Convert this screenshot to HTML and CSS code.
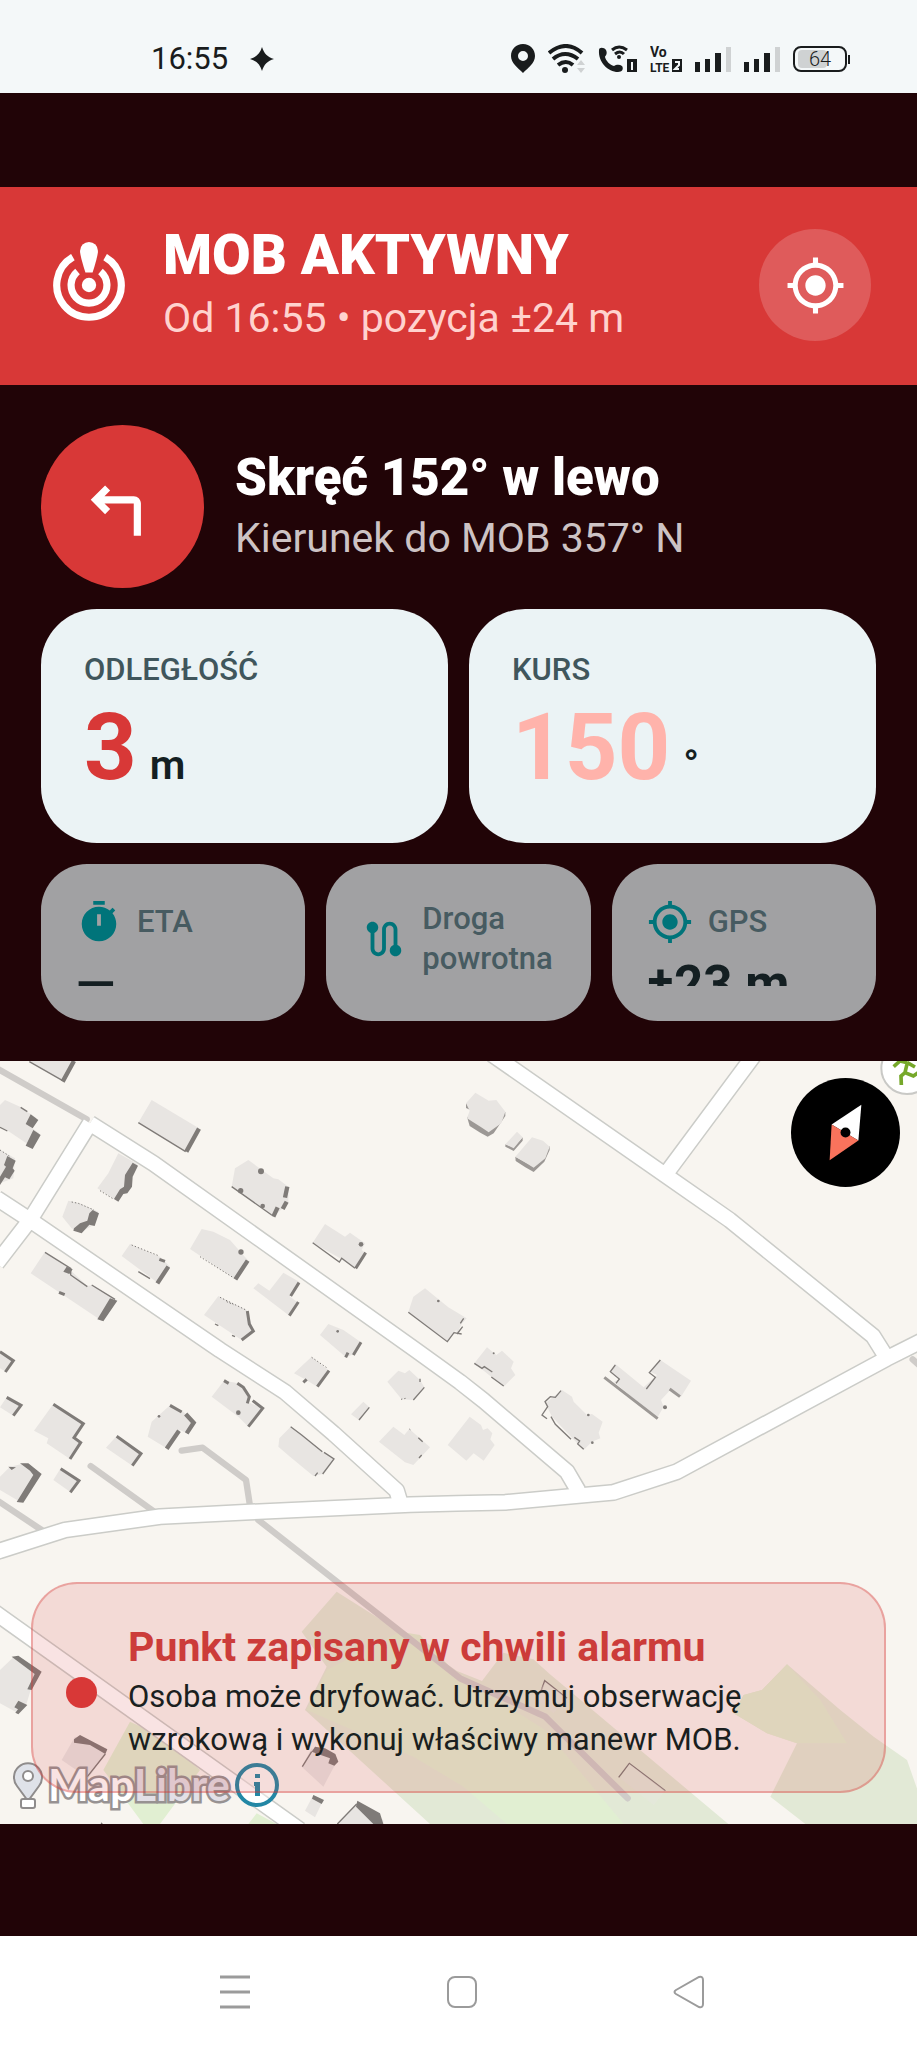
FILE: index.html
```html
<!DOCTYPE html>
<html lang="pl">
  <head>
    <meta charset="UTF-8" />
    <meta name="viewport" content="width=device-width, initial-scale=1.0" />
    <title>MOB aktywny</title>
    <link rel="stylesheet" href="styles.css">
  </head>
  <body>
    <div class="status-bar">
      <div class="status-left">
        <span class="status-time">16:55</span>
        <svg class="status-star" viewBox="0 0 24 24"><path d="M12 0c2 6.500 5.500 10 12 12-6.500 2-10 5.500-12 12-2-6.500-5.500-10-12-12 6.500-2 10-5.500 12-12z" /></svg>
      </div>
      <div class="status-icons">
        <svg width="24" height="29" viewBox="0 0 24 29"><path fill-rule="evenodd" d="M12 0C5 0 0 5 0 12c0 7 7 12 12 17 5-5 12-10 12-17C24 5 19 0 12 0zm0 7a5 5 0 1 1 0 10 5 5 0 0 1 0-10z" /></svg>
        <svg class="icon-wifi" width="37" height="29" viewBox="0 0 37 29">
          <path class="line" d="M1 9q17-14 33 0M5 15q12-10 25 0M10 21q8-6 15 0" />
          <circle cx="17" cy="26" r="3" />
          <path class="faint" d="M29 21l4-5 4 5zM29 24h8l-4 5z" />
        </svg>
        <svg class="icon-call" width="39" height="28" viewBox="0 0 39 28">
          <path d="M1 5c0-3 5-3 7 0 2 4-1 6-1 7 1 4 5 8 9 9 2-1 5-2 8 0 2 3 0 6-4 6C10 27 0 17 1 5z" />
          <path class="line" d="M14 5q7-6 15 0M17 9q5-4 9 0" />
          <circle cx="21" cy="12" r="2" />
          <rect x="29" y="14" width="10" height="13" />
          <path class="cut" d="M34 17v8" />
        </svg>
        <svg class="icon-volte" width="32" height="28" viewBox="0 0 32 28">
          <text x="0" y="12">Vo</text>
          <text x="0" y="27">LTE</text>
          <rect x="22" y="14" width="10" height="13" />
          <path class="cut" d="M25 17h4v3l-4 4h4" />
        </svg>
        <svg width="36" height="26" viewBox="0 0 36 26"><path d="M0 16h5v10H0zM10 13h5v13h-5zM20 7h6v19h-6z" /><path class="faint" d="M31 1h5v25h-5z" /></svg>
        <svg width="36" height="26" viewBox="0 0 36 26"><path d="M0 16h5v10H0zM10 13h5v13h-5zM20 7h6v19h-6z" /><path class="faint" d="M31 1h5v25h-5z" /></svg>
        <svg class="icon-battery" width="58" height="26" viewBox="0 0 58 26">
          <rect class="faint" x="5" y="4" width="29" height="18" rx="4" />
          <rect class="frame" x="1" y="1" width="52" height="24" rx="7" />
          <rect x="55" y="9" width="2" height="9" />
          <text x="27" y="20" text-anchor="middle">64</text>
        </svg>
      </div>
    </div>

    <main class="screen">
      <header class="alarm">
        <svg class="alarm-icon" viewBox="0 0 24 24">
          <path d="M14.500 2.500C14.500 4 13 8.500 13 8.500h-2S9.500 4 9.500 2.500a2.500 2.500 0 0 1 5 0z" />
          <circle cx="12" cy="12" r="2" />
          <path class="ring" d="M16.500 4.200a9 9 0 1 1-9 0M15.200 8.200a5 5 0 1 1-6.400 0" />
        </svg>
        <div class="alarm-text">
          <h1>MOB AKTYWNY</h1>
          <p>Od 16:55 • pozycja ±24 m</p>
        </div>
        <button class="locate-button" aria-label="Moja pozycja">
          <svg viewBox="0 0 24 24"><path d="M12 8c-2.210 0-4 1.790-4 4s1.790 4 4 4 4-1.790 4-4-1.790-4-4-4zm8.940 3c-.46-4.170-3.770-7.480-7.940-7.940V1h-2v2.060C6.830 3.520 3.520 6.830 3.060 11H1v2h2.060c.46 4.170 3.770 7.480 7.940 7.940V23h2v-2.060c4.170-.46 7.480-3.770 7.940-7.940H23v-2h-2.060zM12 19c-3.870 0-7-3.130-7-7s3.130-7 7-7 7 3.130 7 7-3.130 7-7 7z" /></svg>
        </button>
      </header>

      <section class="panel">
        <div class="turn">
          <div class="turn-icon">
            <svg viewBox="0 0 24 24"><path d="M6.830 11l1.580 1.590L7 14l-4-4 4-4 1.410 1.410L6.830 9H15c1.100 0 2 .9 2 2v9h-2v-9H6.830z" /></svg>
          </div>
          <div class="turn-text">
            <h2>Skręć 152° w lewo</h2>
            <p>Kierunek do MOB 357° N</p>
          </div>
        </div>

        <div class="cards">
          <div class="card">
            <div class="card-label">ODLEGŁOŚĆ</div>
            <div class="card-value"><span class="number">3</span><span class="unit">m</span></div>
          </div>
          <div class="card">
            <div class="card-label">KURS</div>
            <div class="card-value"><span class="number number-pale">150</span><span class="unit">°</span></div>
          </div>
        </div>

        <div class="tiles">
          <div class="tile">
            <div class="tile-body">
              <div class="tile-head">
                <svg viewBox="0 0 24 24"><path fill-rule="evenodd" d="M15 1H9v2h6V1zm-4 13h2V8h-2v6zm8.030-6.610l1.420-1.420c-.43-.51-.9-.99-1.410-1.410l-1.420 1.420C16.070 4.740 14.120 4 12 4c-4.970 0-9 4.030-9 9s4.020 9 9 9 9-4.030 9-9c0-2.120-.74-4.070-1.970-5.610z" /></svg>
                <span>ETA</span>
              </div>
              <div class="tile-value">—</div>
            </div>
          </div>
          <div class="tile">
            <div class="tile-body">
              <div class="tile-head">
                <svg viewBox="0 0 24 24"><path d="M19 15.180V7c0-2.210-1.790-4-4-4s-4 1.790-4 4v10c0 1.100-.9 2-2 2s-2-.9-2-2V8.820C8.160 8.400 9 7.300 9 6c0-1.660-1.340-3-3-3S3 4.340 3 6c0 1.300.84 2.400 2 2.820V17c0 2.210 1.790 4 4 4s4-1.790 4-4V7c0-1.100.9-2 2-2s2 .9 2 2v8.180c-1.160.41-2 1.510-2 2.820 0 1.660 1.340 3 3 3s3-1.340 3-3c0-1.300-.84-2.400-2-2.820z" /></svg>
                <span>Droga powrotna</span>
              </div>
            </div>
          </div>
          <div class="tile">
            <div class="tile-body">
              <div class="tile-head">
                <svg viewBox="0 0 24 24"><path d="M12 8c-2.210 0-4 1.790-4 4s1.790 4 4 4 4-1.790 4-4-1.790-4-4-4zm8.940 3c-.46-4.170-3.770-7.480-7.940-7.940V1h-2v2.060C6.830 3.520 3.520 6.830 3.060 11H1v2h2.060c.46 4.170 3.770 7.480 7.940 7.940V23h2v-2.060c4.170-.46 7.480-3.770 7.940-7.940H23v-2h-2.060zM12 19c-3.870 0-7-3.130-7-7s3.130-7 7-7 7 3.130 7 7-3.130 7-7 7z" /></svg>
                <span>GPS</span>
              </div>
              <div class="tile-value">±23 m</div>
            </div>
          </div>
        </div>
      </section>

      <section class="map">
        <svg class="map-canvas" viewBox="0 0 2751 2289" preserveAspectRatio="xMidYMid slice">
          <!-- forest and meadow -->
          <g class="green">
            <path d="M1010 1592L1200 1712 1371 1830 1446 1860 1510 1775 1600 1795 1650 1840 2185 2289H1290L915 1947 980 1817 905 1712z" />
            <path d="M2361 1810L2521 1947 2621 2027 2721 2097 2756 2197V2289H2416L2311 2207 2391 2047 2301 2017 2201 1957 2231 1902 2286 1887z" />
            <path class="green-light" d="M980 1827L1200 1712 1260 1722 1371 1840 1636 2007 1871 2289H1521L1390 2177 1240 2087 920 1947z" />
            <path class="green-light" d="M2361 1810L2461 1917 2541 2047H2391L2301 2017 2201 1957 2231 1902 2286 1887z" />
            <path class="green-light" d="M390 1982L490 2027 600 2127 480 2289H430L310 2127zM770 2257L830 2289H745z" />
          </g>
          <!-- footpaths -->
          <g class="path">
            <path d="M-10 22L260 175M272 1215L460 1350M545 1169L608 1160 738 1257 750 1335M-10 1317L125 1407M775 1377L1380 1852 1636 1967 1883 2212M2738 895L2760 915" />
          </g>
          <!-- roads: casing first, white surface on top -->
          <g class="road-casing">
            <path d="M270 187L460 307 1247 867 1380 963 1451 1019 1701 1232 1735 1290M-10 607L90 477 270 187M-10 412L90 477 660 867 855 993 1000 1117 1190 1289 1200 1322" />
            <path d="M-20 1476L0 1469 195 1407 480 1367 750 1353 1230 1331 1371 1327 1516 1324 1841 1294 2031 1232 2661 892 2770 837" />
            <path d="M1476 -20L2011 353 2189 477 2619 825 2661 892M2270 -28L1996 341M-20 1651L0 1665 900 2307" />
          </g>
          <g class="road">
            <path d="M270 187L460 307 1247 867 1380 963 1451 1019 1701 1232 1735 1290M-10 607L90 477 270 187M-10 412L90 477 660 867 855 993 1000 1117 1190 1289 1200 1322" />
            <path d="M-20 1476L0 1469 195 1407 480 1367 750 1353 1230 1331 1371 1327 1516 1324 1841 1294 2031 1232 2661 892 2770 837" />
            <path d="M1476 -20L2011 353 2189 477 2619 825 2661 892M2270 -28L1996 341M-20 1651L0 1665 900 2307" />
          </g>
          <!-- buildings, north west -->
          <g transform="translate(0 -33)">
            <path class="roof" d="M85 33H225L190 92zM15 150L60 170 110 205 90 230 118 250 95 290 20 240 0 230V165zM0 300L45 325 40 385 0 400zM455 150L597 235 557 305 415 218zM355 310L412 342 350 452 292 415 325 370zM205 452L240 460 295 485 280 525 240 548 215 535 187 500z" />
            <path class="roof" d="M135 605L200 650 262 708 280 705 350 750 305 812 92 670zM390 582L480 620 510 650 475 700 365 618zM605 537L640 545 690 570 745 632 705 687 570 597zM745 330L820 385 835 388 865 410 865 460 820 500 695 410 705 355z" />
            <path class="roof" d="M975 522L1035 560 1050 548 1095 580 1085 600 1098 610 1065 655 1020 625 938 578zM850 668L900 697 870 740 897 760 868 797 760 715 775 700 808 722zM655 738L740 780 760 840 725 870 612 795zM1275 715L1345 772 1400 805 1360 850 1342 875 1225 787 1240 740z" />
            <path class="wall" d="M92 193L115 210 98 235 77 222zM100 240L122 255 98 297 77 287zM22 318L47 332 38 355 44 362 28 388 15 382 0 405V380L18 350 12 345zM398 338L414 347 398 380 396 410 382 430 370 432 355 455 342 447 360 418 372 410 375 375zM278 480L297 490 284 528 268 524 245 550 220 542 222 535 240 520 262 512 268 490zM330 745L352 752 310 814 292 808zM200 650L218 658 208 672 190 665z" />
            <path class="edge thick" d="M222 33L188 95M597 236L559 305M505 650L472 700M743 632L706 688M862 410L855 443M860 455L848 477M833 472L820 500" />
            <path class="edge" d="M478 628L495 634M177 727L194 734M1097 608L1067 655M897 698L872 738M895 756L868 797M742 783L748 822 760 843 725 870" />
            <path class="edge thin" d="M88 35L188 92M62 172L82 185M0 232L22 243M415 218L557 305M135 607L212 655 212 675 262 710M275 705L345 748M415 665L450 686M695 410L815 495M938 578L1018 636 1025 625 1065 655M645 822L655 827M696 856L705 860M1225 787L1342 875 1362 848 1385 852" />
            <path class="edge dotted" d="M395 585L478 618M300 422L342 448M215 456L235 460 282 480M600 620L700 683M660 742L738 780M0 300L28 318" />
            <circle class="wall" cx="783" cy="364" r="9" />
            <circle class="wall" cx="722" cy="422" r="8" />
            <circle class="wall" cx="788" cy="468" r="7" />
            <circle class="wall" cx="723" cy="606" r="8" />
            <circle class="wall" cx="1083" cy="583" r="7" />
            <circle class="wall" cx="1315" cy="753" r="4" />
          </g>
          <!-- buildings, north east -->
          <g transform="translate(1371 -33)">
            <path class="wall-soft" d="M27 160L48 170 45 182 27 174zM30 200L95 240 145 185 145 198 110 250 92 260 70 248 38 228zM145 283L170 292 197 262V272L170 303 145 290zM175 320L230 350 278 288 278 300 262 335 230 366 205 352 176 333z" />
            <path class="roof" d="M55 128L95 152 118 150 145 185 133 220 95 247 75 233 30 205 38 182 27 160zM180 245L197 262 170 295 145 283zM225 262L258 272 278 290 265 325 230 353 212 342 175 320z" />
          </g>
          <!-- buildings, south west -->
          <g transform="translate(0 717)">
            <path class="roof" d="M0 160L40 183 18 215 0 205zM20 292L63 315 40 347 0 322zM160 312L250 370 220 413 242 428 210 477 140 430 145 415 102 392zM350 408L423 460 397 497 318 443zM30 500L75 490 120 520 60 605 0 570V530zM182 505L237 542 212 577 160 540z" />
            <path class="roof" d="M510 316L550 335 585 368 560 400 540 390 500 445 443 410 455 365zM672 242L715 250 750 292 742 305 788 325 745 380 715 350 635 290zM872 380L967 455 1002 477 968 522 940 528 870 470 835 440 838 415z" />
            <path class="roof" d="M985 72L1030 90 1083 127 1055 165 1038 172 960 105zM935 170L987 212 952 260 915 238 882 220zM1195 212L1215 220 1228 210 1260 240 1273 262 1240 300 1205 298 1162 245zM1090 305L1108 322 1077 360 1053 343zM1180 380L1213 405 1228 387 1290 442 1240 495 1215 487 1137 425z" />
            <path class="wall" d="M60 490L85 490 125 522 70 608 50 606 100 525 90 512zM25 500L48 502 35 510z" />
            <path class="edge" d="M0 155L40 182 16 216M20 292L63 316 40 347M160 313L250 371 222 413 242 428 210 477M350 409L423 461 397 497M182 506L237 542 211 577M510 316L545 336M672 242L686 250M712 250L730 262 748 290 742 310M758 302L788 325 745 380M1083 127L1060 165M1044 158L1037 172M987 212L952 260M920 238L910 247" />
            <path class="edge thick" d="M557 342L581 368 560 400M537 392L500 446" />
            <path class="edge thin" d="M872 380L905 405 967 455M972 457L1002 477 968 522M953 518L945 528M1273 262L1240 300M1108 322L1077 360M1255 413L1268 425M1265 465L1257 474M1260 236V246" />
            <path class="edge dotted" d="M935 172L980 203M680 5L700 14M1203 298L1222 294M1228 387L1236 393" />
            <circle class="wall" cx="715" cy="338" r="7" />
            <circle class="wall" cx="477" cy="349" r="4" />
            <circle class="wall" cx="1013" cy="94" r="4" />
          </g>
          <!-- buildings, south east -->
          <g transform="translate(1371 717)">
            <path class="roof" d="M-10 40L20 58 0 102zM38 350L72 375 78 390 92 385 106 400 100 418 113 435 80 482 50 460 28 482-28 435zM90 142L118 165 135 152 170 185 162 205 175 225 140 260 52 190zM315 270L345 290 350 305 390 345 405 342 437 365 425 398 430 415 405 425 380 450 285 350 265 310zM475 192L560 262 600 225 580 215 610 180 702 242 672 290 640 270 612 300 620 320 600 355 470 245 487 238 460 215z" />
            <path class="edge thin" d="M20 55L10 70M17 80L0 102M52 190L75 205 82 200 106 216M103 231L140 258M312 272L295 292 280 290 264 305 272 320 255 345 270 356M282 350L295 373 342 418M352 412L368 423 362 432 380 448M475 195L460 215 487 237 477 250M610 180L577 218 595 232 568 267" />
            <path class="edge soft" d="M442 232L602 356M638 267L669 290" />
            <circle class="wall" cx="624" cy="322" r="6" />
            <circle class="wall" cx="394" cy="345" r="4" />
            <circle class="wall" cx="406" cy="428" r="4" />
            <circle class="wall" cx="110" cy="160" r="3" />
          </g>
          <!-- buildings, south edge -->
          <g transform="translate(0 1527)">
            <path class="roof" d="M40 262L115 305 95 350 80 400 55 430 0 400V300zM225 500L320 545 265 625 185 570zM935 535L1010 575 970 650 905 590zM940 675L970 690 945 742 915 722zM1070 700L1150 750V765H1010z" />
            <path class="wall" d="M35 260L55 257 125 305 95 360 82 358 104 312zM55 392L82 405 55 433 46 428 54 418 43 412zM222 508L240 495 322 538 316 552 270 525 222 518zM945 530L975 535 1006 552 1015 575 1003 587 985 580 990 565 935 545zM940 675L972 690 965 702 936 686zM1072 692L1140 730 1150 762H1120L1068 710zM305 757L311 766H299z" />
            <path class="edge thin" d="M316 552L262 620M935 545L907 590M1012 762L1070 702M1621 370L1634 332 1701 385M1856 622L1888 580 1996 662" />
            <path class="roof faded" d="M1636 335L1701 385 1661 430 1606 385zM1888 582L1996 662 1961 705 1861 625z" />
          </g>
          <!-- sport marker in the corner -->
          <circle class="marker" cx="2721" cy="22" r="77" />
          <path class="runner" d="M2681 17L2700 0 2722 5M2722 5L2715 35 2740 45 2755 35M2715 35L2703 45 2704 72M2722 5L2745 18" />
        </svg>

        <button class="compass" aria-label="Kompas">
          <svg viewBox="0 0 110 110">
            <path class="needle-north" d="M71 27L41 47 68 63z" />
            <path class="needle-south" d="M41 47L68 63 39 83z" />
            <circle cx="55" cy="55" r="5" />
          </svg>
        </button>

        <div class="attribution">
          <svg class="pin" viewBox="0 0 32 48">
            <path d="M16 40L5 25A14 14 0 1 1 27 25z" />
            <circle cx="16" cy="15" r="5" />
            <rect x="9" y="38" width="14" height="9" rx="2" />
          </svg>
          <span class="logo">Map<span>Libre</span></span>
          <button class="info-button" aria-label="Informacje o mapie">
            <svg viewBox="0 0 46 46">
              <circle cx="23" cy="23" r="20" />
              <path d="M21 12h5v4h-5zM20 20h6v14h-5V24h-1z" />
            </svg>
          </button>
        </div>

        <div class="notice">
          <span class="notice-dot"></span>
          <div class="notice-text">
            <h3>Punkt zapisany w chwili alarmu</h3>
            <p>Osoba może dryfować. Utrzymuj obserwację wzrokową i wykonuj właściwy manewr MOB.</p>
          </div>
        </div>
      </section>
    </main>

    <nav class="nav-bar">
      <button aria-label="Ostatnie"><svg class="icon-menu" viewBox="0 0 32 34"><path d="M1 2h30M1 17h30M1 32h30" /></svg></button>
      <button aria-label="Ekran główny"><svg viewBox="0 0 32 34"><rect x="2" y="2" width="28" height="30" rx="7" /></svg></button>
      <button aria-label="Wstecz"><svg viewBox="0 0 32 34"><path d="M3 15L26 2q4-1 4 3v24q0 4-4 3L3 19q-3-2 0-4z" /></svg></button>
    </nav>
  </body>
</html>
```

FILE: styles.css
```css
* {
  box-sizing: border-box;
}
body {
  display: flex;
  flex-direction: column;
  min-height: 100vh;
  margin: 0;
  background-color: #210407;
  font-family: Roboto, "Noto Sans", sans-serif;
}
h1,
h2,
h3,
p {
  margin: 0;
}
button {
  padding: 0;
  border: none;
  background-color: transparent;
  cursor: pointer;
}
svg {
  display: block;
  flex: none;
}

/* status bar */
.status-bar {
  display: flex;
  justify-content: space-between;
  align-items: center;
  height: 93px;
  padding: 24px 66px 0 151px;
  background-color: #f4f8f9;
  color: #191c1d;
}
.status-left {
  display: flex;
  align-items: center;
  gap: 22px;
}
.status-time {
  font-size: 31px;
}
.status-star {
  width: 24px;
  height: 24px;
}
.status-bar svg {
  fill: #191c1d;
}
.status-icons {
  display: flex;
  align-items: center;
  gap: 13px;
}
.status-bar .faint {
  fill: #cfd2d3;
}
.status-bar .line {
  fill: none;
  stroke: #191c1d;
  stroke-width: 3;
}
.status-bar .icon-wifi .line {
  stroke-width: 4;
}
.status-bar .cut {
  fill: none;
  stroke: #f4f8f9;
  stroke-width: 2;
}
.icon-volte text {
  font-family: "Liberation Sans Narrow", Roboto, sans-serif;
  font-size: 14px;
  font-weight: 700;
}
.icon-volte text + text {
  font-size: 12px;
}
.icon-battery .frame {
  fill: none;
  stroke: #191c1d;
  stroke-width: 2;
}
.icon-battery text {
  font-size: 20px;
  font-weight: 300;
}

/* alarm header */
.screen {
  display: flex;
  flex-direction: column;
  flex: 1;
  padding: 94px 0 112px;
}
.alarm {
  display: flex;
  align-items: center;
  gap: 31px;
  padding: 38px 46px 40px;
  background-color: #d83837;
  color: #fff;
}
.alarm-icon {
  width: 86px;
  height: 86px;
  fill: #fff;
}
.alarm-icon .ring {
  fill: none;
  stroke: #fff;
  stroke-width: 2;
}
.alarm-text {
  flex: 1;
}
.alarm h1 {
  margin-bottom: 6px;
  font-size: 56px;
  line-height: 60px;
  font-weight: 900;
}
.alarm p {
  font-size: 41px;
  line-height: 54px;
  color: #ffd2ce;
}
.locate-button {
  display: flex;
  justify-content: center;
  align-items: center;
  width: 112px;
  height: 112px;
  border-radius: 50%;
  background-color: rgba(255, 255, 255, 0.18);
}
.locate-button svg {
  width: 61px;
  height: 61px;
  fill: #fff;
}

/* readings */
.panel {
  display: flex;
  flex-direction: column;
  gap: 21px;
  padding: 40px 41px;
}
.turn {
  display: flex;
  align-items: center;
  gap: 31px;
}
.turn-icon {
  display: flex;
  justify-content: center;
  align-items: center;
  width: 163px;
  height: 163px;
  border-radius: 50%;
  background-color: #d83837;
}
.turn-icon svg {
  width: 86px;
  height: 86px;
  fill: #fff;
}
.turn h2 {
  margin-bottom: 3px;
  font-size: 51px;
  line-height: 60px;
  font-weight: 900;
  color: #fff;
}
.turn p {
  font-size: 41px;
  line-height: 54px;
  color: #cdc3c4;
}
.cards {
  display: grid;
  grid-template-columns: repeat(2, 1fr);
  gap: 21px;
}
.card {
  padding: 42px 43px 41px;
  border-radius: 56px;
  background-color: #ebf3f5;
}
.card-label {
  margin-bottom: 5px;
  font-size: 31px;
  line-height: 38px;
  font-weight: 500;
  color: #40565c;
}
.card-value {
  display: flex;
  align-items: baseline;
  gap: 13px;
}
.number {
  font-size: 92px;
  line-height: 108px;
  font-weight: 700;
  color: #d83837;
}
.number-pale {
  color: #ffb3ab;
}
.unit {
  font-size: 41px;
  font-weight: 600;
  color: #141f22;
}
.tiles {
  display: grid;
  grid-template-columns: repeat(3, 1fr);
  gap: 21px;
}
.tile {
  padding: 35px;
  border-radius: 46px;
  background-color: #a1a1a3;
}
/* the value line is taller than the tile and gets cut off */
.tile-body {
  height: 87px;
  overflow: hidden;
}
.tile-head {
  display: flex;
  align-items: center;
  gap: 15px;
  min-height: 46px;
  font-size: 31px;
  line-height: 40px;
  font-weight: 500;
  color: #475b61;
}
.tile-head svg {
  width: 46px;
  height: 46px;
  fill: #00747a;
}
.tile-value {
  margin-top: 6px;
  font-size: 51px;
  line-height: 68px;
  font-weight: 700;
  color: #141f22;
}

/* map */
.map {
  position: relative;
  flex: 1;
  min-height: 600px;
  overflow: hidden;
  background-color: #f8f5f0;
}
.map-canvas {
  position: absolute;
  top: 0;
  left: 0;
  width: 100%;
  height: 100%;
}
.green {
  fill: #e2e9d6;
}
.green-light {
  fill: #e1efd2;
}
.path {
  fill: none;
  stroke: #cfccc9;
  stroke-width: 19;
  stroke-linecap: round;
  stroke-linejoin: round;
}
.road-casing {
  fill: none;
  stroke: #cbccc8;
  stroke-width: 52;
  stroke-linejoin: round;
}
.road {
  fill: none;
  stroke: #fff;
  stroke-width: 43;
  stroke-linejoin: round;
}
.roof {
  fill: #e8e5e2;
}
.faded {
  opacity: 0.4;
}
.wall {
  fill: #7f7b78;
}
.wall-soft {
  fill: #9c9895;
}
.edge {
  fill: none;
  stroke: #7f7b78;
  stroke-width: 9;
}
.thick {
  stroke-width: 13;
}
.thin {
  stroke-width: 4;
}
.dotted {
  stroke-width: 3;
  stroke-dasharray: 4 6;
}
.soft {
  stroke: #9c9895;
}
.marker {
  fill: #fff;
  stroke: #c9c9c6;
  stroke-width: 6;
}
.runner {
  fill: none;
  stroke: #76a82a;
  stroke-width: 11;
}
.compass {
  position: absolute;
  top: 17px;
  right: 17px;
  width: 109px;
  height: 109px;
  border-radius: 50%;
  background-color: #000;
}
.needle-north {
  fill: #fff;
}
.needle-south {
  fill: #f9735c;
}
.attribution {
  position: absolute;
  left: 12px;
  bottom: 15px;
  display: flex;
  align-items: center;
  gap: 4px;
}
.pin {
  width: 32px;
  height: 48px;
  fill: #dfe2e9;
  stroke: #8f8c8c;
  stroke-width: 2;
}
.pin circle,
.pin rect {
  fill: #fff;
}
.logo {
  font-family: Lato, sans-serif;
  font-size: 43px;
  line-height: 48px;
  font-weight: 700;
  color: #fff;
  -webkit-text-stroke: 5px #979292;
  paint-order: stroke fill;
}
.logo span {
  color: #e2dfe6;
}
.info-button svg {
  width: 46px;
  height: 46px;
  fill: #2387a5;
}
.info-button circle {
  fill: rgba(255, 255, 255, 0.4);
  stroke: #2387a5;
  stroke-width: 4;
}
.notice {
  position: absolute;
  left: 31px;
  right: 31px;
  bottom: 31px;
  display: flex;
  align-items: center;
  gap: 31px;
  padding: 39px 33px 30px;
  border: 2px solid rgba(216, 56, 55, 0.35);
  border-radius: 46px;
  background-color: rgba(216, 56, 55, 0.14);
}
.notice-dot {
  flex: none;
  width: 31px;
  height: 31px;
  border-radius: 50%;
  background-color: #d83837;
}
.notice h3 {
  margin-bottom: 4px;
  font-size: 41px;
  line-height: 48px;
  font-weight: 700;
  color: #cc3c3a;
}
.notice p {
  font-size: 31px;
  line-height: 43px;
  color: #1a1f20;
}

/* system navigation */
.nav-bar {
  display: flex;
  justify-content: center;
  height: 112px;
  padding-left: 6px;
  background-color: #fff;
}
.nav-bar button {
  display: flex;
  justify-content: center;
  align-items: center;
  width: 227px;
}
.nav-bar svg {
  width: 32px;
  height: 34px;
  fill: none;
  stroke: #9b9b9b;
  stroke-width: 2;
}
.nav-bar .icon-menu {
  stroke-width: 3;
}
```
